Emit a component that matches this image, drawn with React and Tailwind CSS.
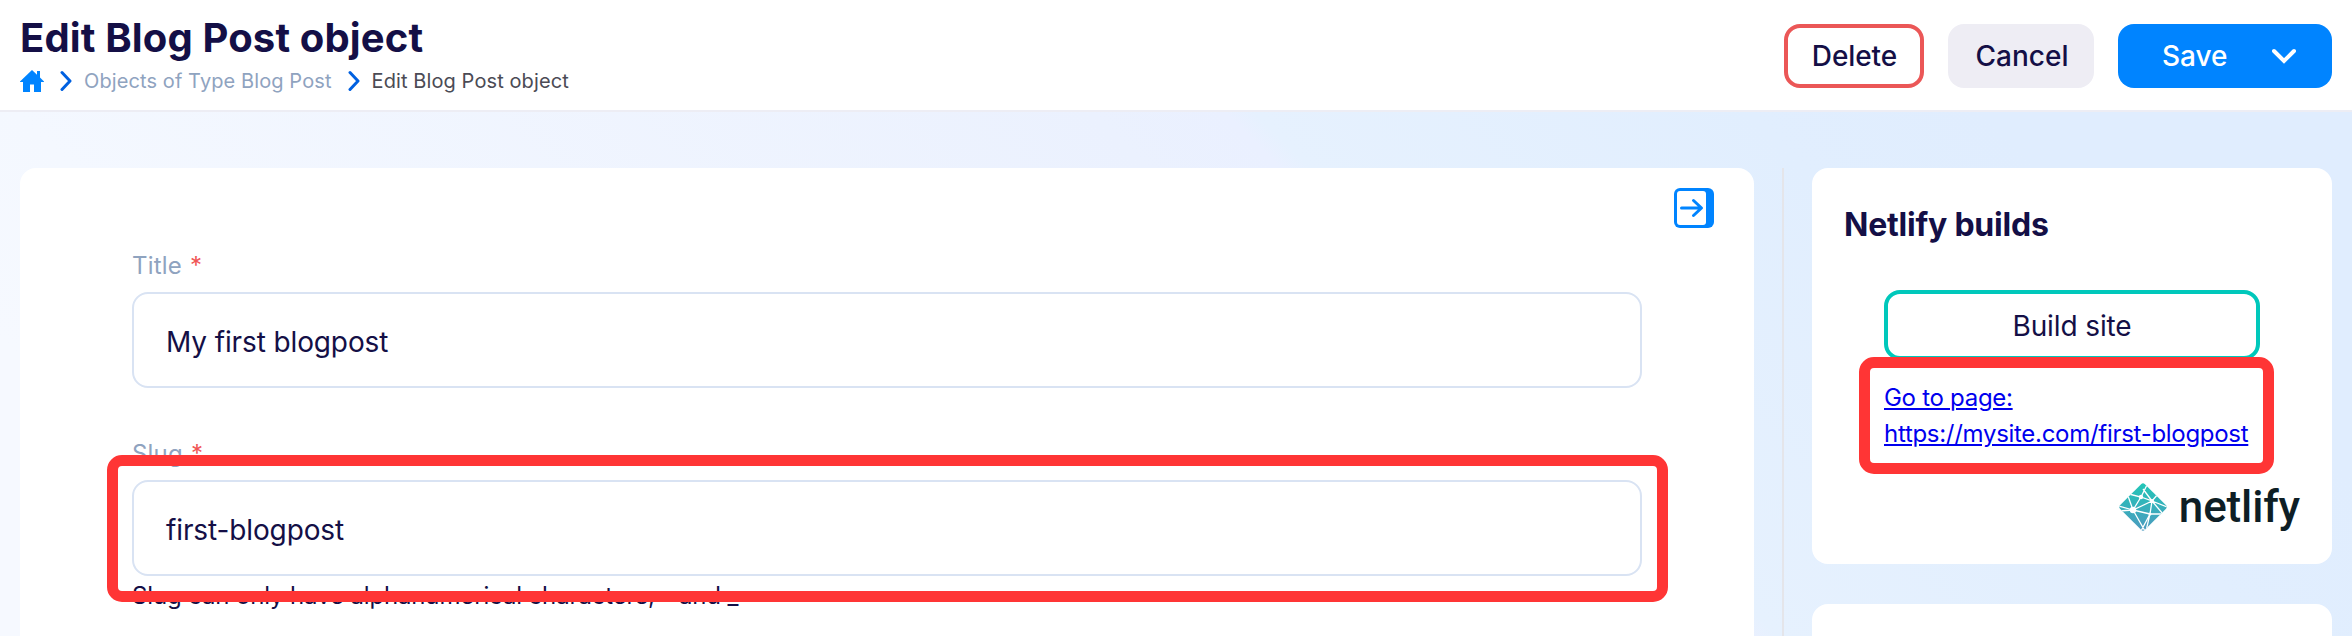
function Chevron({ className }) {
  return (
    <svg className={className} viewBox="0 0 12 22" fill="none" stroke="#0060e0" strokeWidth="3">
      <path d="M2 2.500 10 11 2 19.500" strokeLinecap="round" strokeLinejoin="round" />
    </svg>
  );
}

function HomeIcon() {
  return (
    <svg className="h-[22px] w-6 shrink-0" viewBox="0 0 24 22" fill="#0084ff">
      <path d="M12 0 0 11.500V12h3v10h7v-7.500h4V22h7V12h3v-.5L20 7.500V1h-3v3.700z" />
    </svg>
  );
}

function CollapseIcon() {
  return (
    <svg className="size-10" viewBox="0 0 40 40">
      <rect width="40" height="40" rx="6" fill="#0084ff" />
      <rect x="3" y="3" width="29" height="34" rx="3" fill="#fff" />
      <path d="M7.500 20H27M19.500 12.500l8 7.500-8 7.500" fill="none" stroke="#0084ff" strokeWidth="3" strokeLinecap="round" strokeLinejoin="round" />
    </svg>
  );
}

function NetlifyMark() {
  return (
    <svg className="size-12" viewBox="0 0 48 48">
      <defs>
        <linearGradient id="mark" x1="0" y1="0" x2="0" y2="1">
          <stop offset="0" stopColor="#20c6b7" />
          <stop offset="1" stopColor="#4d9abf" />
        </linearGradient>
        <clipPath id="diamond">
          <path d="M22.300 1q1.700-1.500 3.400 0L47 22.300q1.500 1.700 0 3.400L25.700 47q-1.700 1.500-3.400 0L1 25.700q-1.500-1.700 0-3.400z" />
        </clipPath>
      </defs>
      <g clipPath="url(#diamond)">
        <rect width="48" height="48" fill="url(#mark)" />
        <g stroke="#fff" strokeWidth="1.300" fill="none">
          <path d="M14 27 22 14 29 0M10 11l12 3 11 4 15 6M14 27l19-9 6-7M22 14l11 4-2 13-4 17M14 27l17 4 12 0M14 27 9 13M14 27 0 23M14 27 0 28M14 27l12 21M33 18l11 13M31 31l-9 17M24 6l9 12" />
        </g>
        <circle cx="14" cy="27" r="3.200" fill="#fff" />
        <circle cx="22" cy="14" r="2.200" fill="#fff" />
        <circle cx="33" cy="18" r="2" fill="#fff" />
        <circle cx="31" cy="31" r="1.500" fill="#fff" />
      </g>
    </svg>
  );
}

function Field({ label, value, className }) {
  return (
    <div className={className}>
      <div className="flex h-9 items-center gap-2 text-[24px] tracking-[0.2px] text-[#8fa3bf]">
        {label} <span className="text-[#f05656]">*</span>
      </div>
      <div className="mt-2 flex h-24 items-center rounded-2xl border-2 border-[#d9e3f3] bg-white px-8 pt-1 text-[28px] tracking-[-0.12px]">
        {value}
      </div>
    </div>
  );
}

export default function App() {
  return (
    <div className="flex h-[636px] w-[2352px] flex-col overflow-hidden bg-[linear-gradient(45deg,#f6f9ff_10%,#f4f8ff_18%,#ebf1fe_54%,#eaf0ff_58.5%,#e6f1fe_59.5%,#e1eefe_76%,#e0edfe_84%)] font-['Inter',sans-serif] text-[#140f46]">
      <header className="flex h-28 shrink-0 items-start justify-between border-b-2 border-[#ededf4] bg-white px-5">
        <div className="pt-[14px]">
          <h1 className="text-[40px] leading-[48px] font-bold tracking-[0.14px]">Edit Blog Post object</h1>
          <nav className="mt-1 flex h-[30px] items-center text-[20px] tracking-[0.1px]">
            <HomeIcon />
            <Chevron className="mr-3 ml-4 h-[22px] w-3" />
            <span className="text-[#8fa3bf]">Objects of Type Blog Post</span>
            <Chevron className="mr-3 ml-4 h-[22px] w-3" />
            <span className="text-[#4b4b55]">Edit Blog Post object</span>
          </nav>
        </div>
        <div className="flex gap-6 pt-6 text-[28px] font-medium">
          <button className="h-16 w-[140px] rounded-2xl border-4 border-[#eb5757] bg-white pl-px tracking-[-0.1px]">Delete</button>
          <button className="h-16 w-[146px] rounded-2xl bg-[#eeedf4] pl-0.5">Cancel</button>
          <button className="flex h-16 w-[214px] items-center justify-between rounded-2xl bg-[#0084ff] pr-9 pl-11 text-white">
            Save
            <svg className="h-4 w-6" viewBox="0 0 24 16" fill="none" stroke="#fff" strokeWidth="4" strokeLinecap="round">
              <path d="M2 3l10 10L22 3" />
            </svg>
          </button>
        </div>
      </header>

      <div className="flex flex-1 px-5 pt-14">
        <main className="relative h-[600px] w-[1734px] shrink-0 rounded-t-2xl bg-white px-28">
          <div className="absolute top-5 right-10">
            <CollapseIcon />
          </div>
          <Field className="pt-20" label="Title" value="My first blogpost" />
          <Field className="pt-12" label="Slug" value="first-blogpost" />
          <p className="mt-1 text-[24px] leading-8 tracking-[-0.14px]">Slug can only have alphanumerical characters, - and _</p>
          <div className="absolute top-[287px] left-[87px] h-[147px] w-[1561px] rounded-[15px] border-[11px] border-[#ff3535]" />
        </main>
        <div className="ml-7 w-0.5 shrink-0 bg-[#e4e5ea]" />
        <aside className="ml-7 flex w-[520px] shrink-0 flex-col gap-10">
          <section className="relative h-[396px] shrink-0 rounded-2xl bg-white px-8 pt-[37px]">
            <h2 className="text-[32px] leading-[40px] font-bold tracking-[-0.22px]">Netlify builds</h2>
            <div className="mt-[45px] px-10">
              <button className="h-[70px] w-full rounded-2xl border-4 border-[#00c8bb] pt-0.5 text-[28px] tracking-[-0.12px]">Build site</button>
              <p className="mt-5 text-[24px] leading-9 tracking-[-0.29px] whitespace-nowrap text-[#0000ee] underline">
                Go to page:
                <br />
                https://mysite.com/first-blogpost
              </p>
            </div>
            <div className="mt-[31px] flex h-12 items-center justify-end gap-3">
              <NetlifyMark />
              <span className="font-['Roboto',sans-serif] text-[44px] leading-[48px] font-medium tracking-[-0.15px] text-[#0e1e25]">netlify</span>
            </div>
            <div className="absolute top-[189px] left-[47px] h-[117px] w-[415px] rounded-[15px] border-[11px] border-[#ff3535]" />
          </section>
          <section className="h-40 shrink-0 rounded-t-2xl bg-white" />
        </aside>
      </div>
    </div>
  );
}
